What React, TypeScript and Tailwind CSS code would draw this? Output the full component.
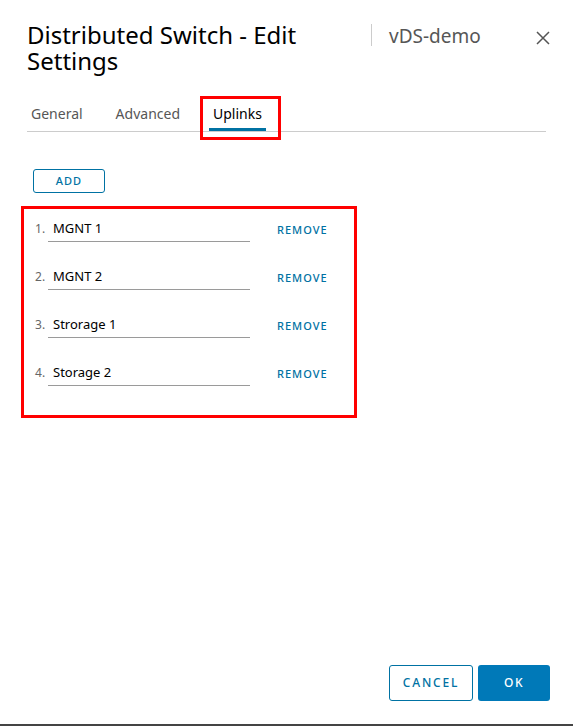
import React from 'react';

const uplinks = ['MGNT 1', 'MGNT 2', 'Strorage 1', 'Storage 2'];

const font = { fontFamily: '"Noto Sans", "Open Sans", sans-serif' };

const App: React.FC = () => {
  return (
    <div
      className="w-[573px] h-[726px] bg-white flex flex-col border-b-2 border-[#444]"
      style={font}
    >
      {/* header */}
      <div className="flex items-start pt-[22px] pl-[27px] pr-[23px]">
        <h3 className="text-[24px] leading-[26px] text-black w-[330px]">
          Distributed Switch - Edit
          <br />
          Settings
        </h3>
        <div className="ml-[14px] mt-[2px] h-[22px] w-px bg-[#ccc]" />
        <div className="ml-[17px] mt-[4px] text-[19px] leading-[20px] text-[#565656]">vDS-demo</div>
        <button className="ml-auto mt-[9px] text-[#666]" aria-label="Close">
          <svg width="14" height="14" viewBox="0 0 14 14" fill="none">
            <path d="M1 1L13 13M13 1L1 13" stroke="#555" strokeWidth="1.5" />
          </svg>
        </button>
      </div>

      {/* tabs */}
      <div className="mt-[21px] mx-[27px] flex gap-[25px] border-b border-[#ccc]">
        <div className="h-[36px] px-[4px] flex items-center text-[14px] text-[#565656]">General</div>
        <div className="h-[36px] px-[4px] flex items-center text-[14px] text-[#565656]">Advanced</div>
        <div className="relative h-[36px] px-[4px] flex items-center text-[14px] text-black border-b-[3px] border-[#0072a3] mb-[-1px]">
          <span className="mt-[3px]">Uplinks</span>
          <div className="absolute left-[-9px] right-[-15px] top-[1px] bottom-[-12px] border-[3px] border-[#f00]" />
        </div>
      </div>

      {/* add */}
      <div className="mt-[35px] ml-[33px]">
        <button className="h-[24px] w-[72px] rounded-[3px] border border-[#0072a3] text-[11px] font-medium tracking-[1px] text-[#0072a3]">
          ADD
        </button>
      </div>

      {/* uplink list */}
      <div className="mt-[13px] ml-[21px] w-[336px] h-[212px] border-[3px] border-[#f00] pt-[9px] pl-[11px] flex flex-col gap-[24px]">
        {uplinks.map((name, i) => (
          <div key={name} className="flex items-end h-[24px]">
            <span className="w-[13px] text-[12px] leading-[18px] pb-[4px] text-[#666]">{i + 1}.</span>
            <div className="w-[202px] border-b border-[#9a9a9a] pl-[5px] pb-[4px] text-[13px] leading-[18px] text-black">
              {name}
            </div>
            <span className="ml-[27px] mb-[4px] text-[11px] font-medium tracking-[1px] text-[#0072a3]">REMOVE</span>
          </div>
        ))}
      </div>

      {/* footer */}
      <div className="mt-auto mb-[23px] mr-[23px] flex justify-end gap-[5px]">
        <button className="h-[36px] w-[84px] rounded-[3px] border border-[#0072a3] text-[12px] font-medium tracking-[1.8px] text-[#0072a3]">
          CANCEL
        </button>
        <button className="h-[36px] w-[72px] rounded-[3px] bg-[#0079b8] text-[12px] font-medium tracking-[1.5px] text-white">
          OK
        </button>
      </div>
    </div>
  );
};

export default App;
